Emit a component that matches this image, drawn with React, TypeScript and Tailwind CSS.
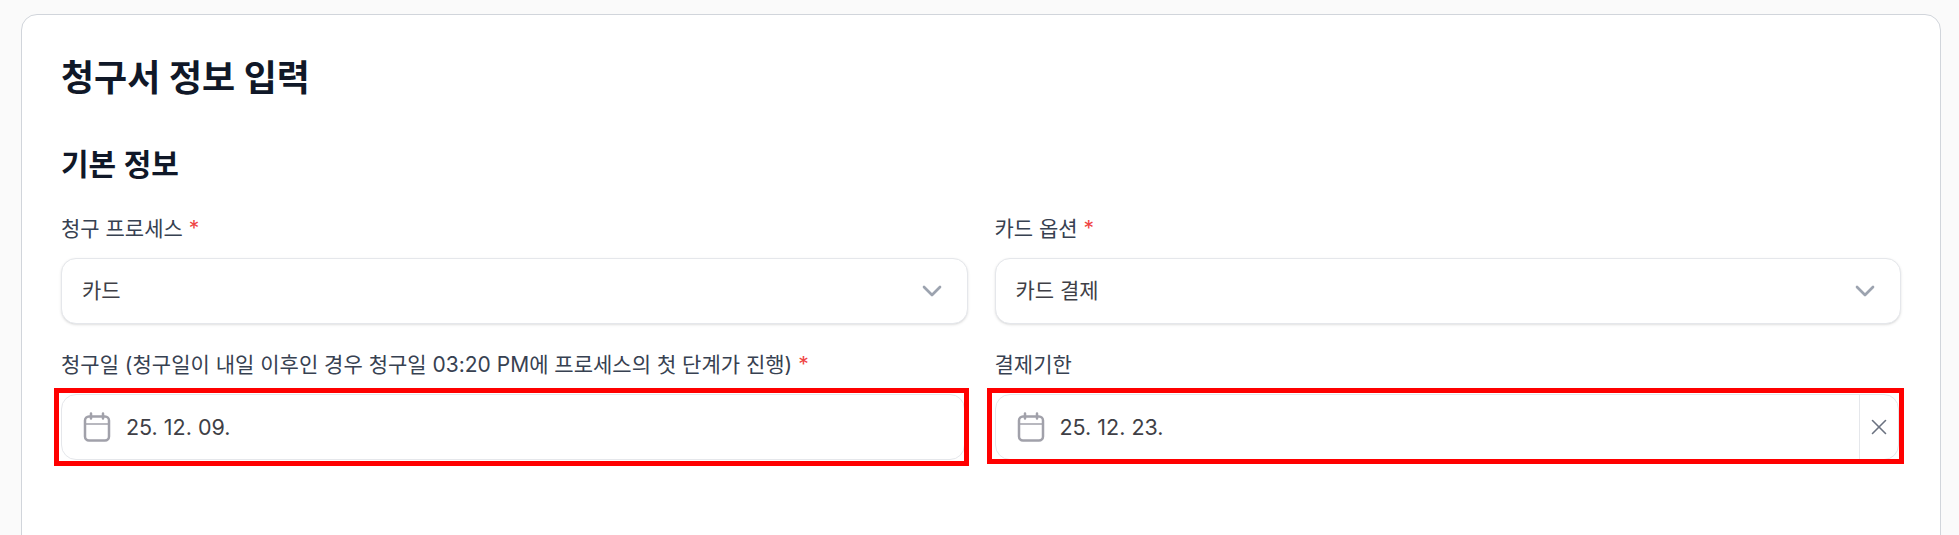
import { ChevronDown, X } from "lucide-react";

const FONT = "font-['Inter','Noto_Sans_CJK_KR',sans-serif]";

function Label({ text, required }: { text: string; required?: boolean }) {
  return (
    <div className="mb-[14px] h-[30px] text-[21px] leading-[30px] text-[#374151]">
      {text}
      {required && <span className="text-[#ef4444]"> *</span>}
    </div>
  );
}

function SelectBox({ value }: { value: string }) {
  return (
    <div className="flex h-[66px] items-center justify-between rounded-[15px] border border-[#e5e7eb] bg-white pl-[20px] pr-[19px] shadow-sm">
      <span className="text-[21px] text-[#3f3f46]">{value}</span>
      <ChevronDown className="h-[32px] w-[32px] text-[#9ca3af]" strokeWidth={2} />
    </div>
  );
}

function CalendarIcon() {
  return (
    <svg width="28" height="30" viewBox="0 0 28 30" fill="none" stroke="#a1a1aa" strokeWidth="2.5" strokeLinecap="round" strokeLinejoin="round">
      <path d="M8 1.5v5M20 1.5v5" />
      <path d="M2 12h24" strokeWidth="1.6" />
      <rect x="2" y="4.5" width="24" height="24" rx="4" />
    </svg>
  );
}

function DateBox({ value, clearable }: { value: string; clearable?: boolean }) {
  return (
    <div className="relative">
      <div className={`flex h-[66px] items-center rounded-[15px] border border-[#e5e7eb] bg-white ${clearable ? "mr-[2px]" : "mr-[3px]"}`}>
        <div className="ml-[21px] mr-[15px]">
          <CalendarIcon />
        </div>
        <span className="flex-1 text-[21.5px] text-[#3f3f46]">{value}</span>
        {clearable && (
          <div className="flex h-full w-[39px] items-center justify-center border-l border-[#e5e7eb]">
            <X className="h-[26px] w-[26px] text-[#6b7280]" strokeWidth={1.5} />
          </div>
        )}
      </div>
      {/* 빨간 표시 박스 */}
      <div
        className={
          clearable
            ? "absolute -left-[8px] -right-[3px] -top-[6px] -bottom-[4px] border-[5px] border-[#ff0000]"
            : "absolute -left-[7px] -right-[1px] -top-[6px] -bottom-[6px] border-[5px] border-[#ff0000]"
        }
      />
    </div>
  );
}

export default function App() {
  return (
    <div className={`h-[535px] overflow-hidden bg-[#fafafa] pl-[21px] pt-[14px] ${FONT}`}>
      <div className="h-[600px] w-[1920px] rounded-[16px] border border-[#d1d5db] bg-white px-[39px] pt-[41px]">
        <h1 className="text-[36px] font-bold leading-[44px] text-[#101828]">청구서 정보 입력</h1>
        <h2 className="mt-[44px] text-[30px] font-semibold leading-[40px] text-[#101828]">기본 정보</h2>
        <div className="mt-[30px] grid grid-cols-2 gap-x-[27px] gap-y-[26px]">
          <div>
            <Label text="청구 프로세스" required />
            <SelectBox value="카드" />
          </div>
          <div>
            <Label text="카드 옵션" required />
            <SelectBox value="카드 결제" />
          </div>
          <div>
            <Label text="청구일 (청구일이 내일 이후인 경우 청구일 03:20 PM에 프로세스의 첫 단계가 진행)" required />
            <DateBox value="25. 12. 09." />
          </div>
          <div>
            <Label text="결제기한" />
            <DateBox value="25. 12. 23." clearable />
          </div>
        </div>
      </div>
    </div>
  );
}
